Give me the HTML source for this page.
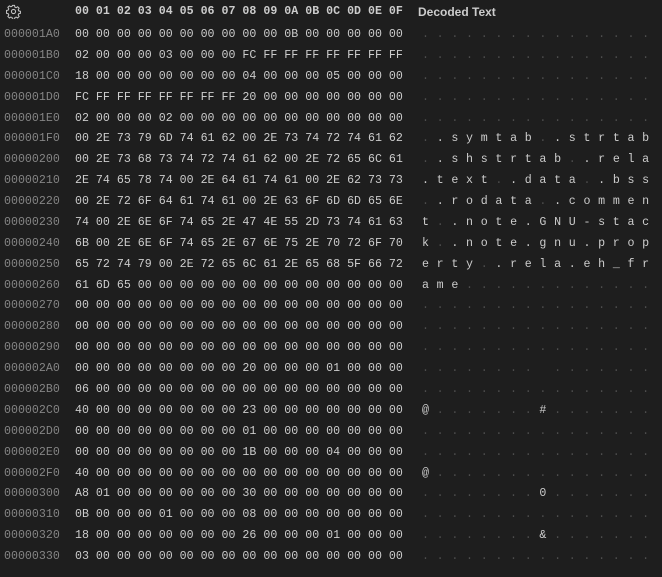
<!DOCTYPE html>
<html><head><meta charset="utf-8"><style>
html,body{margin:0;padding:0;background:#1e1e1e;width:662px;height:577px;overflow:hidden}
body{position:relative;font-family:"Liberation Mono",monospace;font-size:11.63px;color:#cccccc}
.r{position:absolute;left:0;height:21px;line-height:21px;white-space:pre}
.a{position:absolute;left:4px;color:#858585}
.h{position:absolute;left:75px}
.t{position:absolute;left:422px;letter-spacing:7.7px}
.d{color:#4d4d4d}
.hd{position:absolute;top:2px;height:20px;line-height:20px;white-space:pre}
</style></head><body>
<svg style="position:absolute;left:6px;top:4px" width="15" height="15" viewBox="0 0 16 16"><g fill="none" stroke="#c5c5c5" stroke-width="1.1"><circle cx="8" cy="8" r="2.2"/><path d="M6.9 1.5h2.2l.4 1.8 1.3.6 1.6-1 1.6 1.6-1 1.6.6 1.3 1.8.4v2.2l-1.8.4-.6 1.3 1 1.6-1.6 1.6-1.6-1-1.3.6-.4 1.8H6.9l-.4-1.8-1.3-.6-1.6 1-1.6-1.6 1-1.6-.6-1.3-1.8-.4V6.9l1.8-.4.6-1.3-1-1.6 1.6-1.6 1.6 1 1.3-.6z"/></g></svg>
<div class="hd" style="left:75px;font-weight:bold;color:#cccccc">00 01 02 03 04 05 06 07 08 09 0A 0B 0C 0D 0E 0F</div>
<div class="hd" style="left:418px;font-family:'Liberation Sans',sans-serif;font-size:12px;font-weight:bold;color:#cccccc">Decoded Text</div>

<div class="r" style="top:24px"><span class="a">000001A0</span><span class="h">00 00 00 00 00 00 00 00 00 00 0B 00 00 00 00 00</span><span class="t d">................</span></div>
<div class="r" style="top:44.9px"><span class="a">000001B0</span><span class="h">02 00 00 00 03 00 00 00 FC FF FF FF FF FF FF FF</span><span class="t d">................</span></div>
<div class="r" style="top:65.8px"><span class="a">000001C0</span><span class="h">18 00 00 00 00 00 00 00 04 00 00 00 05 00 00 00</span><span class="t d">................</span></div>
<div class="r" style="top:86.6px"><span class="a">000001D0</span><span class="h">FC FF FF FF FF FF FF FF 20 00 00 00 00 00 00 00</span><span class="t d">................</span></div>
<div class="r" style="top:107.5px"><span class="a">000001E0</span><span class="h">02 00 00 00 02 00 00 00 00 00 00 00 00 00 00 00</span><span class="t d">................</span></div>
<div class="r" style="top:128.4px"><span class="a">000001F0</span><span class="h">00 2E 73 79 6D 74 61 62 00 2E 73 74 72 74 61 62</span><span class="t"><span class="d">.</span>.symtab<span class="d">.</span>.strtab</span></div>
<div class="r" style="top:149.3px"><span class="a">00000200</span><span class="h">00 2E 73 68 73 74 72 74 61 62 00 2E 72 65 6C 61</span><span class="t"><span class="d">.</span>.shstrtab<span class="d">.</span>.rela</span></div>
<div class="r" style="top:170.2px"><span class="a">00000210</span><span class="h">2E 74 65 78 74 00 2E 64 61 74 61 00 2E 62 73 73</span><span class="t">.text<span class="d">.</span>.data<span class="d">.</span>.bss</span></div>
<div class="r" style="top:191px"><span class="a">00000220</span><span class="h">00 2E 72 6F 64 61 74 61 00 2E 63 6F 6D 6D 65 6E</span><span class="t"><span class="d">.</span>.rodata<span class="d">.</span>.commen</span></div>
<div class="r" style="top:211.9px"><span class="a">00000230</span><span class="h">74 00 2E 6E 6F 74 65 2E 47 4E 55 2D 73 74 61 63</span><span class="t">t<span class="d">.</span>.note.GNU-stac</span></div>
<div class="r" style="top:232.8px"><span class="a">00000240</span><span class="h">6B 00 2E 6E 6F 74 65 2E 67 6E 75 2E 70 72 6F 70</span><span class="t">k<span class="d">.</span>.note.gnu.prop</span></div>
<div class="r" style="top:253.7px"><span class="a">00000250</span><span class="h">65 72 74 79 00 2E 72 65 6C 61 2E 65 68 5F 66 72</span><span class="t">erty<span class="d">.</span>.rela.eh_fr</span></div>
<div class="r" style="top:274.6px"><span class="a">00000260</span><span class="h">61 6D 65 00 00 00 00 00 00 00 00 00 00 00 00 00</span><span class="t">ame<span class="d">.............</span></span></div>
<div class="r" style="top:295.4px"><span class="a">00000270</span><span class="h">00 00 00 00 00 00 00 00 00 00 00 00 00 00 00 00</span><span class="t d">................</span></div>
<div class="r" style="top:316.3px"><span class="a">00000280</span><span class="h">00 00 00 00 00 00 00 00 00 00 00 00 00 00 00 00</span><span class="t d">................</span></div>
<div class="r" style="top:337.2px"><span class="a">00000290</span><span class="h">00 00 00 00 00 00 00 00 00 00 00 00 00 00 00 00</span><span class="t d">................</span></div>
<div class="r" style="top:358.1px"><span class="a">000002A0</span><span class="h">00 00 00 00 00 00 00 00 20 00 00 00 01 00 00 00</span><span class="t d">........ .......</span></div>
<div class="r" style="top:379px"><span class="a">000002B0</span><span class="h">06 00 00 00 00 00 00 00 00 00 00 00 00 00 00 00</span><span class="t d">................</span></div>
<div class="r" style="top:399.8px"><span class="a">000002C0</span><span class="h">40 00 00 00 00 00 00 00 23 00 00 00 00 00 00 00</span><span class="t">@<span class="d">.......</span>#<span class="d">.......</span></span></div>
<div class="r" style="top:420.7px"><span class="a">000002D0</span><span class="h">00 00 00 00 00 00 00 00 01 00 00 00 00 00 00 00</span><span class="t d">................</span></div>
<div class="r" style="top:441.6px"><span class="a">000002E0</span><span class="h">00 00 00 00 00 00 00 00 1B 00 00 00 04 00 00 00</span><span class="t d">................</span></div>
<div class="r" style="top:462.5px"><span class="a">000002F0</span><span class="h">40 00 00 00 00 00 00 00 00 00 00 00 00 00 00 00</span><span class="t">@<span class="d">...............</span></span></div>
<div class="r" style="top:483.4px"><span class="a">00000300</span><span class="h">A8 01 00 00 00 00 00 00 30 00 00 00 00 00 00 00</span><span class="t"><span class="d">........</span>0<span class="d">.......</span></span></div>
<div class="r" style="top:504.2px"><span class="a">00000310</span><span class="h">0B 00 00 00 01 00 00 00 08 00 00 00 00 00 00 00</span><span class="t d">................</span></div>
<div class="r" style="top:525.1px"><span class="a">00000320</span><span class="h">18 00 00 00 00 00 00 00 26 00 00 00 01 00 00 00</span><span class="t"><span class="d">........</span>&amp;<span class="d">.......</span></span></div>
<div class="r" style="top:546px"><span class="a">00000330</span><span class="h">03 00 00 00 00 00 00 00 00 00 00 00 00 00 00 00</span><span class="t d">................</span></div>
</body></html>
